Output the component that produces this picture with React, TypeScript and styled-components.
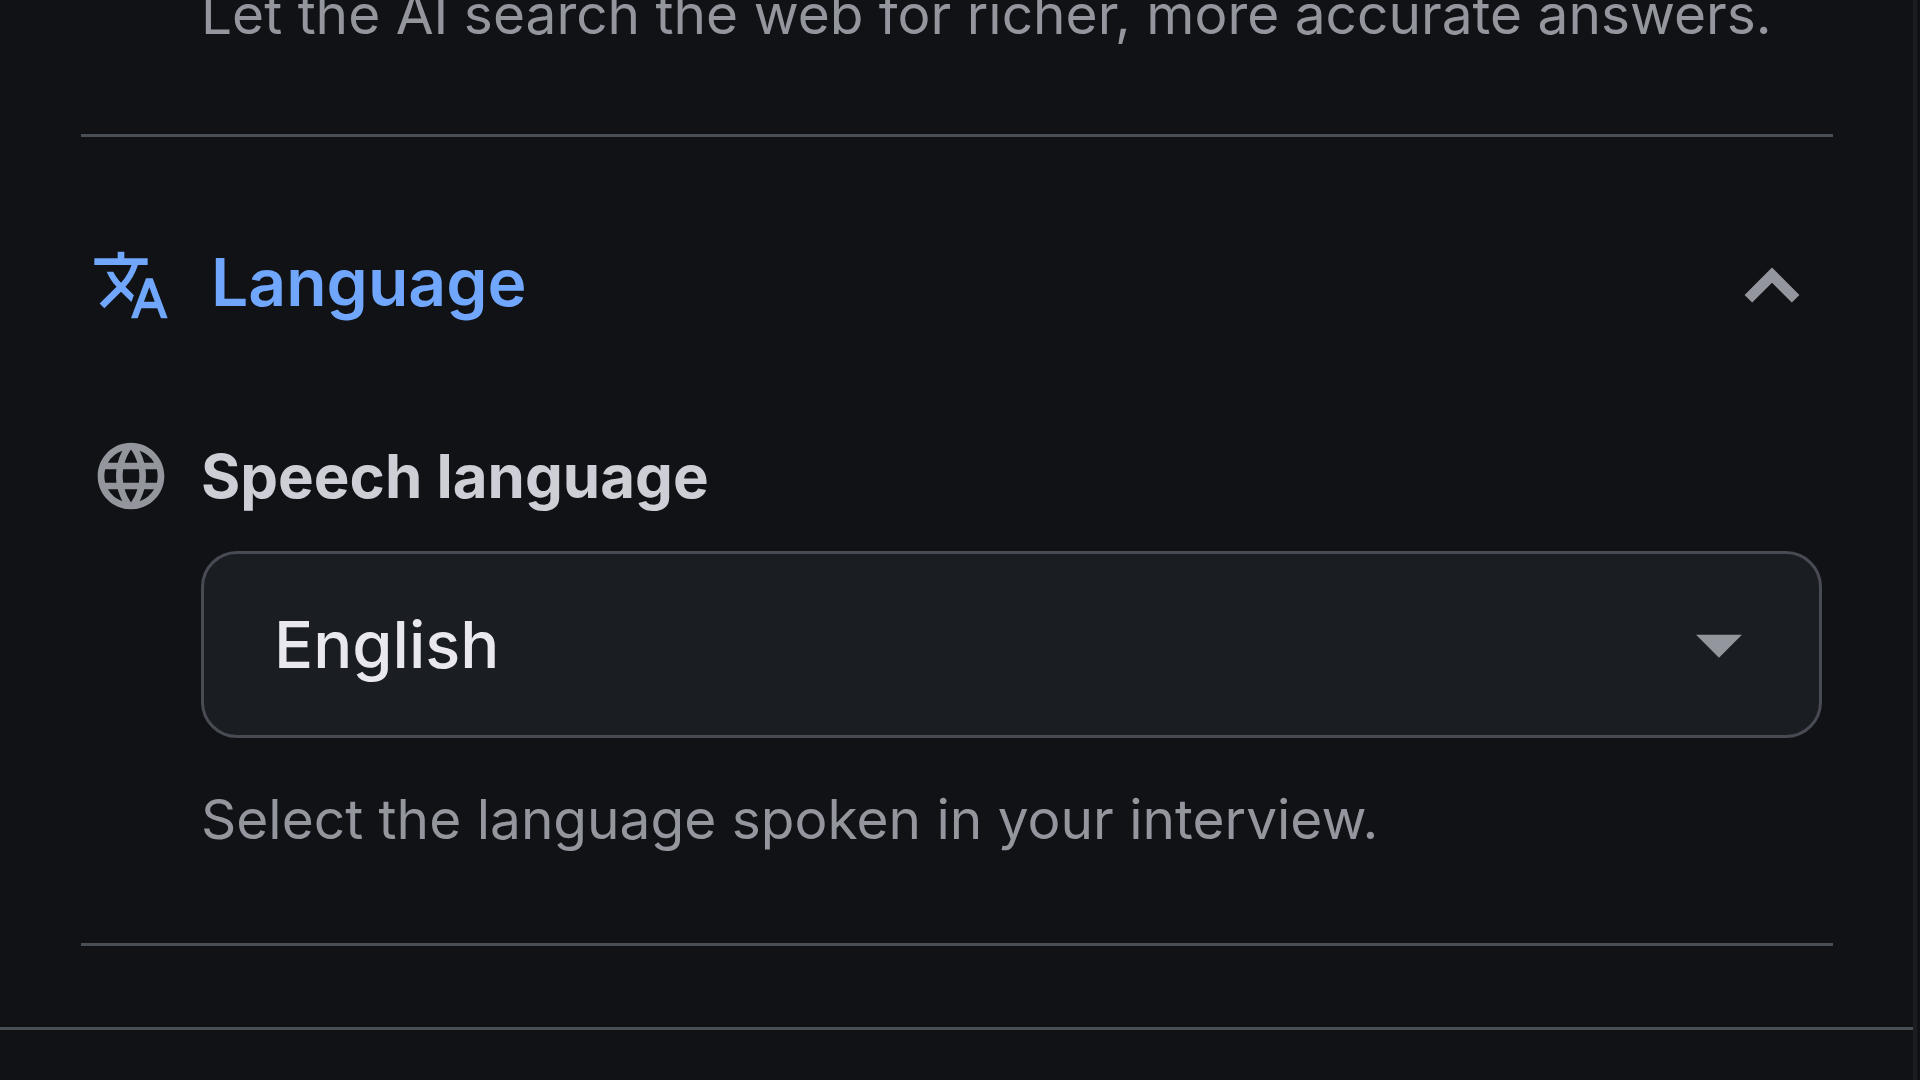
import React, { useState } from "react";
import styled, { createGlobalStyle } from "styled-components";
import { MdArrowDropDown, MdLanguage, MdTranslate } from "react-icons/md";

const GlobalStyle = createGlobalStyle`
  *, *::before, *::after { box-sizing: border-box; }
  body {
    margin: 0;
    background: #101216;
    color: #e8e8ee;
    font-family: Inter, "Liberation Sans", sans-serif;
    font-optical-sizing: none;
  }
`;

const Panel = styled.div`
  display: flex;
  flex-direction: column;
  min-height: 100vh;
  margin-right: 3px;
  border-right: 4px solid #1a1d21;
  overflow: hidden;
`;

const Settings = styled.main`
  padding: 0 80px 81px 81px;
`;

const Section = styled.section`
  border-bottom: 3px solid #494d54;
`;

const Field = styled.div`
  padding: 0 11px 84px 120px;
`;

const SearchField = styled(Field)`
  margin-top: -26px;
  padding: 0 0 80px 120px;
`;

const HelpText = styled.p`
  margin: 0;
  color: #94969e;
  font-size: 55px;
  line-height: 80px;
`;

const SectionHeading = styled.h2`
  margin: 0;
  padding: 94px 0 97px;
  font: inherit;
`;

const SectionToggle = styled.button`
  display: flex;
  align-items: center;
  width: 100%;
  padding: 0 7px 0 10px;
  border: 0;
  background: none;
  color: #70a7fc;
  font: inherit;
  font-size: 66px;
  font-weight: 600;
  line-height: 80px;
  text-align: left;
  cursor: pointer;
`;

const ToggleLabel = styled.span`
  flex: 1;
  padding: 0 0 6px 40px;
`;

const Icon = styled.span<{ $size: number; $color?: string }>`
  display: flex;
  flex: none;
  font-size: ${(p) => p.$size}px;
  color: ${(p) => p.$color ?? "inherit"};
`;

const Chevron = styled.svg<{ $open: boolean }>`
  width: 1em;
  height: 1em;
  fill: currentColor;
  transform: rotate(${(p) => (p.$open ? 0 : 180)}deg);
`;

const LabelRow = styled.div`
  display: flex;
  align-items: center;
  gap: 30px;
  padding: 0 10px;
`;

const FieldLabel = styled.label`
  color: #cdced6;
  font-size: 60px;
  font-weight: 700;
  line-height: 80px;
`;

const SelectBox = styled.div`
  position: relative;
  margin: 35px 0 41px;
`;

const Select = styled.select`
  display: block;
  width: 100%;
  height: 187px;
  padding: 0 160px 0 70px;
  border: 3px solid #484b53;
  border-radius: 36px;
  appearance: none;
  background: #1a1d21;
  color: #e8e8ee;
  font: inherit;
  font-size: 65px;
  font-weight: 500;
  cursor: pointer;
`;

const SelectArrow = styled(Icon)`
  position: absolute;
  top: 0;
  bottom: 2px;
  right: 48px;
  align-items: center;
  pointer-events: none;
`;

const Footer = styled.footer`
  flex: 1;
  border-top: 3px solid #494d54;
`;

export default function App() {
  const [open, setOpen] = useState(true);

  return (
    <>
      <GlobalStyle />
      <Panel>
        <Settings>
          <Section>
            <SearchField>
              <HelpText>
                Let the AI search the web for richer, more accurate answers.
              </HelpText>
            </SearchField>
          </Section>
          <Section>
            <SectionHeading>
              <SectionToggle
                type="button"
                aria-expanded={open}
                onClick={() => setOpen(!open)}
              >
                <Icon $size={80}>
                  <MdTranslate />
                </Icon>
                <ToggleLabel>Language</ToggleLabel>
                <Icon $size={108} $color="#94969e">
                  <Chevron $open={open} viewBox="0 0 24 24" aria-hidden="true">
                    <path d="M12 8.1l6.1 6.1-1.7 1.7-4.4-4.4-4.4 4.4-1.7-1.7z" />
                  </Chevron>
                </Icon>
              </SectionToggle>
            </SectionHeading>
            {open && (
              <>
                <LabelRow>
                  <Icon $size={80} $color="#94969e">
                    <MdLanguage />
                  </Icon>
                  <FieldLabel htmlFor="speech-language">
                    Speech language
                  </FieldLabel>
                </LabelRow>
                <Field>
                  <SelectBox>
                    <Select
                      id="speech-language"
                      defaultValue="en"
                      aria-describedby="speech-language-help"
                    >
                      <option value="en">English</option>
                    </Select>
                    <SelectArrow $size={110} $color="#94969e">
                      <MdArrowDropDown />
                    </SelectArrow>
                  </SelectBox>
                  <HelpText id="speech-language-help">
                    Select the language spoken in your interview.
                  </HelpText>
                </Field>
              </>
            )}
          </Section>
        </Settings>
        <Footer />
      </Panel>
    </>
  );
}
